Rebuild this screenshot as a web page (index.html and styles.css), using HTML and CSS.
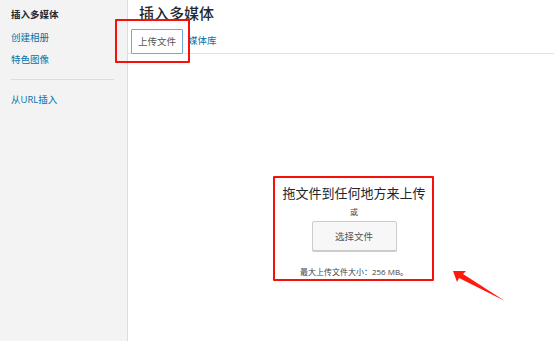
FILE: index.html
```html
<!DOCTYPE html>
<html lang="zh-CN">
<head>
    <meta charset="UTF-8">
    <title>插入多媒体</title>
    <link rel="stylesheet" href="styles.css">
</head>
<body>
    <div class="frame">
        <!-- Left menu -->
        <aside class="menu">
            <div class="menu-item active">插入多媒体</div>
            <a class="menu-item" href="#">创建相册</a>
            <a class="menu-item" href="#">特色图像</a>
            <div class="separator"></div>
            <a class="menu-item" href="#">从URL插入</a>
        </aside>

        <!-- Main panel -->
        <main class="content">
            <h1 class="title">插入多媒体</h1>
            <div class="tabs">
                <span class="tab current">上传文件</span>
                <a class="tab" href="#">媒体库</a>
            </div>
            <div class="uploader">
                <div class="drop-text">拖文件到任何地方来上传</div>
                <div class="or-text">或</div>
                <button class="select-button">选择文件</button>
                <div class="max-size">最大上传文件大小：256 MB。</div>
            </div>
        </main>

        <!-- Annotations -->
        <div class="mark mark-tab"></div>
        <div class="mark mark-upload"></div>
        <svg class="arrow" width="554" height="341" viewBox="0 0 554 341">
            <polygon points="453,271 466,271 463,274 505,301 459,278 457,282" fill="#ff1a0a"/>
        </svg>
    </div>
</body>
</html>
```

FILE: styles.css
```css
body {
    margin: 0;
    padding: 0;
    background-color: white;
    font-family: "Open Sans", "Noto Sans CJK SC", sans-serif;
    overflow: hidden;
}
.frame {
    position: relative;
    display: flex;
    width: 554px;
    height: 341px;
}
.menu {
    width: 128px;
    flex-shrink: 0;
    background-color: #f3f3f3;
    border-right: 1px solid #dcdcdc;
    padding-top: 4px;
    box-sizing: border-box;
}
.menu-item {
    display: block;
    height: 22.5px;
    line-height: 22.5px;
    padding-left: 11px;
    font-size: 9.5px;
    color: #0073aa;
    text-decoration: none;
}
.menu-item.active {
    color: #23282d;
    font-weight: bold;
}
.separator {
    margin: 7.5px 13px 9px 11px;
    border-top: 1px solid #dcdcdc;
}
.content {
    flex: 1;
    display: flex;
    flex-direction: column;
}
.title {
    margin: 3px 0 0 11px;
    font-size: 15px;
    line-height: 20px;
    font-weight: 500;
    color: #23282d;
}
.tabs {
    display: flex;
    align-items: flex-end;
    margin-top: 6px;
    padding-left: 3px;
    height: 24px;
    border-bottom: 1px solid #e2e2e2;
}
.tab {
    height: 25px;
    line-height: 23px;
    padding: 0 6px 0 5px;
    margin-bottom: -1px;
    font-size: 9.5px;
    color: #0073aa;
    text-decoration: none;
    box-sizing: border-box;
}
.tab.current {
    width: 52px;
    padding: 0;
    text-align: center;
    color: #555;
    background-color: white;
    border: 1px solid #6ea9dc;
    border-radius: 1px;
}
.uploader {
    display: flex;
    flex-direction: column;
    align-items: center;
    margin-top: 130px;
    padding-left: 26px;
}
.drop-text {
    font-size: 13px;
    line-height: 18px;
    color: #23282d;
}
.or-text {
    margin-top: 4px;
    font-size: 8px;
    line-height: 12px;
    color: #444;
}
.select-button {
    margin-top: 3px;
    width: 85px;
    height: 30px;
    background-color: #f7f7f7;
    border: 1px solid #cccccc;
    border-radius: 2px;
    box-shadow: 0 1px 0 #cccccc;
    font-family: inherit;
    font-size: 9.5px;
    color: #555;
    padding: 0;
}
.max-size {
    margin-top: 15px;
    font-size: 8px;
    line-height: 12px;
    color: #444;
}
.mark {
    position: absolute;
    border: 2px solid #f5100a;
    border-radius: 1px;
    box-sizing: border-box;
}
.mark-tab {
    left: 115px;
    top: 19px;
    width: 75px;
    height: 44px;
}
.mark-upload {
    left: 273px;
    top: 176px;
    width: 161px;
    height: 105px;
}
.arrow {
    position: absolute;
    left: 0;
    top: 0;
    pointer-events: none;
}
```
